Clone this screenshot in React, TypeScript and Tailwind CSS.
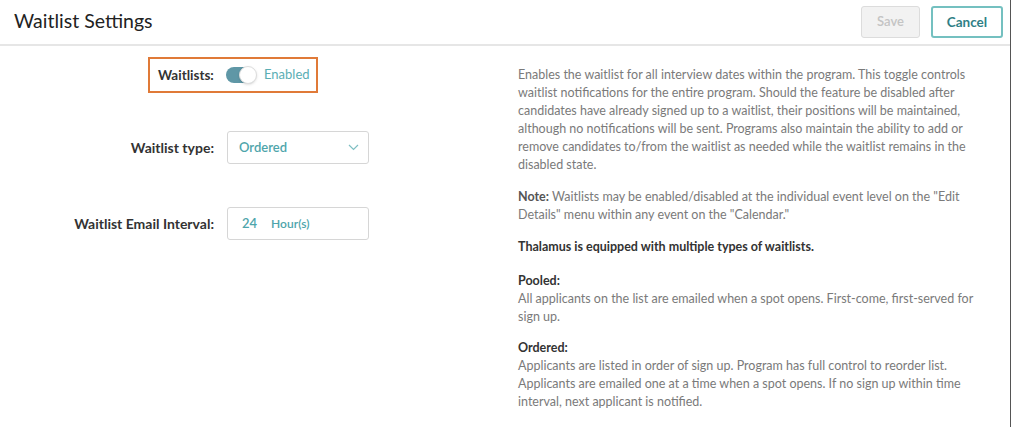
import React from 'react';

const font = { fontFamily: 'Lato, "Liberation Sans", sans-serif' };

export default function App() {
  return (
    <div style={font} className="w-[1011px] h-[427px] bg-white border-r border-[#555] text-[13px]">
      {/* Header */}
      <div className="h-[46px] flex items-center justify-between pl-[14px] pr-[7px] border-b-2 border-[#e6e6e6]">
        <h1 className="text-[19.5px] text-[#222] font-normal pb-[2px]">Waitlist Settings</h1>
        <div className="flex items-center gap-[11px]">
          <button
            disabled
            className="w-[59px] h-[32px] rounded-[3px] border border-[#dcdcdc] bg-[#f2f2f2] text-[#c4c4c4] text-[13px] font-semibold"
          >
            Save
          </button>
          <button className="w-[72px] h-[32px] rounded-[3px] border-2 border-[#74c0c0] bg-white text-[#2f7f86] text-[13.5px] font-bold">
            Cancel
          </button>
        </div>
      </div>

      <div className="flex">
        {/* Form */}
        <div className="w-[518px] shrink-0">
          <div className="ml-[148px] mt-[11px] w-[170px] h-[36px] border-2 border-[#e07a38] flex items-center pl-[8px]">
            <span className="font-bold text-[#333] text-[13.5px] w-[57px]">Waitlists:</span>
            <div className="ml-[11px] w-[30px] h-[16px] rounded-full bg-[#5f97a6] relative">
              <div className="absolute right-[-1px] top-[-1px] w-[18px] h-[18px] rounded-full bg-white border border-[#ddd] shadow-sm" />
            </div>
            <span className="ml-[8px] text-[#5aaeb4]">Enabled</span>
          </div>

          <div className="flex items-center mt-[38px]">
            <span className="w-[214px] text-right font-bold text-[#333] text-[14px]">Waitlist type:</span>
            <div className="ml-[13px] w-[142px] h-[33px] border border-[#d6d6d6] rounded-[3px] flex items-center justify-between pl-[11px] pr-[9px]">
              <span className="text-[#4ea5ab] font-semibold">Ordered</span>
              <svg width="11" height="7" viewBox="0 0 11 7" fill="none">
                <path d="M1 1l4.5 4.5L10 1" stroke="#7fbfc3" strokeWidth="1.2" />
              </svg>
            </div>
          </div>

          <div className="flex items-center mt-[43px]">
            <span className="w-[214px] text-right font-bold text-[#333] text-[14px]">Waitlist Email Interval:</span>
            <div className="ml-[13px] w-[142px] h-[33px] border border-[#d6d6d6] rounded-[3px] flex items-center pl-[14px]">
              <span className="text-[#4ea5ab] font-semibold">24</span>
              <span className="ml-[14px] text-[#4ea5ab] font-semibold text-[12px]">Hour(s)</span>
            </div>
          </div>
        </div>

        {/* Description */}
        <div className="w-[455px] pt-[20px] text-[#7a7a7a] leading-[18px] text-[12.5px]">
          <p>
            Enables the waitlist for all interview dates within the program. This toggle controls waitlist
            notifications for the entire program. Should the feature be disabled after candidates have already
            signed up to a waitlist, their positions will be maintained, although no notifications will be sent.
            Programs also maintain the ability to add or remove candidates to/from the waitlist as needed while the
            waitlist remains in the disabled state.
          </p>
          <p className="mt-[14px]">
            <strong className="font-bold text-[#555]">Note:</strong> Waitlists may be enabled/disabled at the
            individual event level on the "Edit Details" menu within any event on the "Calendar."
          </p>
          <p className="mt-[14px] font-bold text-[#333]">Thalamus is equipped with multiple types of waitlists.</p>
          <p className="mt-[16px] font-bold text-[#333]">Pooled:</p>
          <p>All applicants on the list are emailed when a spot opens. First-come, first-served for sign up.</p>
          <p className="mt-[13px] font-bold text-[#333]">Ordered:</p>
          <p>
            Applicants are listed in order of sign up. Program has full control to reorder list. Applicants are
            emailed one at a time when a spot opens. If no sign up within time interval, next applicant is notified.
          </p>
        </div>
      </div>
    </div>
  );
}
